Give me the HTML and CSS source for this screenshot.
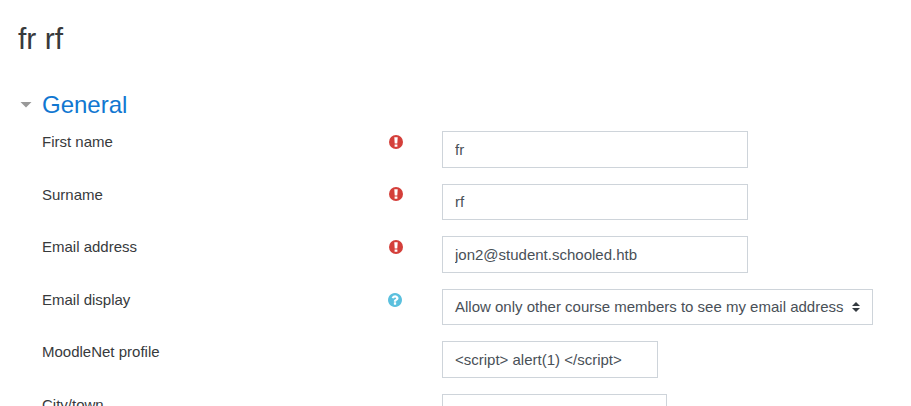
FILE: index.html
```
<!DOCTYPE html>
<html lang="en">
<head>
<meta charset="utf-8">
<title>fr rf</title>
<link rel="stylesheet" href="styles.css">
</head>
<body>
<svg width="0" height="0" class="defs" aria-hidden="true">
<symbol id="required" viewBox="0 0 14 14"><circle cx="7" cy="7" r="7"/><path class="mark" d="M5.3 2.2h3.4L8.3 8.4H5.7zM5.6 9.4h2.8v2.3H5.6z"/></symbol>
<symbol id="help" viewBox="0 0 1536 1536"><path d="M896 1248v-192q0-14-9-23t-23-9h-192q-14 0-23 9t-9 23v192q0 14 9 23t23 9h192q14 0 23-9t9-23zm256-672q0-88-55.500-163t-138.500-116-170-41q-243 0-371 213-15 24 8 42l132 100q7 6 19 6 16 0 25-12 53-68 86-92 34-24 86-24 48 0 85.500 26t37.500 59q0 38-20 61t-68 45q-63 28-115.500 86.500t-52.500 125.500v36q0 14 9 23t23 9h192q14 0 23-9t9-23q0-19 21.500-49.500t54.500-49.500q32-18 49-28.500t46-35 44.500-48 28-60.500 12.500-81zm384 192q0 209-103 385.500t-279.500 279.500-385.500 103-385.500-103-279.500-279.500-103-385.500 103-385.500 279.500-279.500 385.500-103 385.500 103 279.500 279.500 103 385.500z"/></symbol>
</svg>
<main>
<h1>fr rf</h1>
<form>
<h2><span class="caret"></span>General</h2>
<div class="row"><label for="first">First name</label><svg class="icon required"><use href="#required"/></svg><input id="first" value="fr"></div>
<div class="row"><label for="last">Surname</label><svg class="icon required"><use href="#required"/></svg><input id="last" value="rf"></div>
<div class="row"><label for="email">Email address</label><svg class="icon required"><use href="#required"/></svg><input id="email" value="jon2@student.schooled.htb"></div>
<div class="row"><label for="display">Email display</label><svg class="icon help"><use href="#help"/></svg><div class="select" id="display"><span>Allow only other course members to see my email address</span><svg class="arrows" viewBox="0 0 8 10"><path d="M4 0L8 4H0zM0 6H8L4 10z"/></svg></div></div>
<div class="row"><label for="net">MoodleNet profile</label><span class="icon"></span><input id="net" class="net" value="&lt;script&gt; alert(1) &lt;/script&gt;"></div>
<div class="row"><label for="city">City/town</label><span class="icon"></span><input id="city" class="city"></div>
</form>
</main>
</body>
</html>
```
FILE: styles.css
```
* { box-sizing: border-box; }
html, body { height: 100%; overflow: hidden; }
body { margin: 0; background: #fff; color: #373a3c; font: 15px/22.5px "Liberation Sans", Arial, sans-serif; }
.defs { position: absolute; }
main { padding: 21px 18px 0; }
h1 { margin: 0 0 41px; font-size: 30px; line-height: 35px; font-weight: 400; color: #373a3c; }
h2 { display: flex; align-items: center; margin: 0 0 19px; font-size: 24px; line-height: 15px; font-weight: 400; color: #1177d1; padding-left: 2px; }
.caret { width: 12px; height: 6px; margin-right: 10px; background: #999; clip-path: polygon(0 0, 100% 0, 50% 100%); }
.row { display: grid; grid-template-columns: 346px 54px max-content; align-items: start; margin-left: 24px; height: 36.5px; margin-bottom: 16px; }
.icon { width: 14px; height: 14px; margin-top: 4px; }
.required { fill: #d43f3a; margin-left: 1px; margin-top: 3.5px; }
.mark { fill: #fff; }
.help { fill: #5bc0de; }
input, .select { width: 306px; height: 36.5px; border: 1px solid #ced4da; padding: 6px 12px; font: inherit; color: #495057; background: #fff; border-radius: 0; }
.select { width: 431px; display: flex; align-items: center; justify-content: space-between; white-space: nowrap; }
.arrows { width: 8px; height: 10px; fill: #343a40; }
.net { width: 216px; }
.city { width: 225px; }
```
